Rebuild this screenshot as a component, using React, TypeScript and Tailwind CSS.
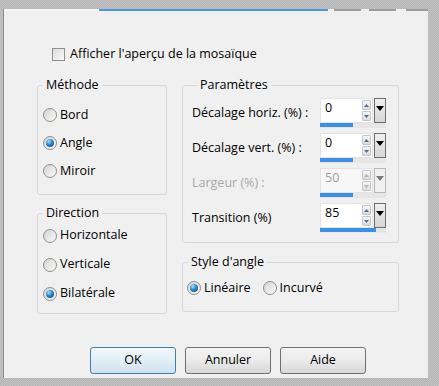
import React from "react";

function Radio({ checked }: { checked?: boolean }) {
  return (
    <span className="flex h-[14px] w-[14px] shrink-0 items-center justify-center rounded-full border border-[#8e8f8f] bg-linear-to-br from-[#d4d4d4] to-[#fbfbfb]">
      {checked && (
        <span className="h-[8px] w-[8px] rounded-full bg-[radial-gradient(circle_at_35%_30%,#a6e0ff_0%,#2a87c9_45%,#0b3f70_100%)]" />
      )}
    </span>
  );
}

function RadioRow({ label, checked, h }: { label: string; checked?: boolean; h: string }) {
  return (
    <div className={`flex items-center gap-[3px] pl-[5px] ${h}`}>
      <Radio checked={checked} />
      <span>{label}</span>
    </div>
  );
}

function Arrow({ up, disabled }: { up?: boolean; disabled?: boolean }) {
  return (
    <span className="flex h-[10px] w-[9px] items-center justify-center rounded-[1px] border border-[#c2c7cc] bg-linear-to-b from-[#f7f7f7] to-[#dcdcdc]">
      <svg width="5" height="3" viewBox="0 0 5 3">
        <path d={up ? "M0 3 L2.5 0 L5 3 Z" : "M0 0 L2.5 3 L5 0 Z"} fill={disabled ? "#b5b5b5" : "#4f6f95"} />
      </svg>
    </span>
  );
}

function SpinField({ value, pct, disabled }: { value: string; pct: number; disabled?: boolean }) {
  return (
    <div className="flex w-[66px] flex-col">
      <div className="flex h-[25px]">
        <div className={`flex flex-1 border border-[#e3e3e3] ${disabled ? "bg-[#f7f7f7] text-[#9d9d9d]" : "bg-white text-black"}`}>
          <span className="pl-[4px] pt-[1px] leading-[16px]">{value}</span>
          <div className="ml-auto flex flex-col gap-[1px] pr-[1px] pt-[1px]">
            <Arrow up disabled={disabled} />
            <Arrow disabled={disabled} />
          </div>
        </div>
        <div className={`ml-[1px] flex w-[12px] items-start justify-center border pt-[7px] ${disabled ? "border-[#b9b9b9] bg-[#f0f0f0]" : "border-[#6f6f6f] bg-linear-to-b from-[#f0f0f0] to-[#d6d6d6]"}`}>
          <svg width="8" height="5" viewBox="0 0 8 5">
            <path d="M0 0 L4 5 L8 0 Z" fill={disabled ? "#7a7a7a" : "#000"} />
          </svg>
        </div>
      </div>
      <div className="h-[5px] bg-[#e6e6e6]">
        <div className="h-[4px] bg-[#3d8fdf]" style={{ width: `${pct}%` }} />
      </div>
    </div>
  );
}

function ParamRow({ label, value, pct, disabled }: { label: string; value: string; pct: number; disabled?: boolean }) {
  return (
    <div className="flex h-[35px] items-start">
      <span className={`flex h-[30px] w-[128px] items-center ${disabled ? "text-[#a9a9a9]" : ""}`}>{label}</span>
      <SpinField value={value} pct={pct} disabled={disabled} />
    </div>
  );
}

function Group({ title, className, children }: { title: string; className: string; children: React.ReactNode }) {
  return (
    <fieldset className={`rounded-[3px] border border-[#d5d9dc] ${className}`}>
      <legend className="ml-[5px] px-[3px] leading-[16px]">{title}</legend>
      {children}
    </fieldset>
  );
}

function Button({ label, primary }: { label: string; primary?: boolean }) {
  return (
    <button
      className={`h-[27px] w-[86px] rounded-[3px] border ${
        primary
          ? "border-[#3c7fb1] bg-linear-to-b from-[#f2f8fc] via-[#e2eef6] to-[#cfe2ee]"
          : "border-[#707070] bg-linear-to-b from-[#f4f4f4] via-[#ebebeb] to-[#d8d8d8]"
      }`}
    >
      {label}
    </button>
  );
}

export default function App() {
  return (
    <div className="h-[386px] w-[439px] bg-[repeating-conic-gradient(#b6b6b6_0_25%,#c3c3c3_0_50%)] bg-[length:2px_2px] pl-[3px] pt-[9px] font-['Open_Sans',sans-serif] text-[12.5px] text-black">
      <div className="flex h-[369px] w-[425px] flex-col border-l border-[#8c8c8c] bg-[#f0f0f0]">
        <div className="flex h-[2px]">
          <div className="w-[95px] bg-[#f7f7f7]" />
          <div className="w-[229px] bg-[#4a97d8]" />
          <div className="w-[6px]" />
          <div className="w-[27px] bg-[#9c9c9c]" />
          <div className="w-[8px]" />
          <div className="w-[27px] bg-[#9c9c9c]" />
          <div className="w-[10px]" />
          <div className="w-[22px] bg-[#9c9c9c]" />
        </div>

        <div className="mt-[35px] flex h-[17px] items-center gap-[5px] pl-[48px]">
          <span className="h-[13px] w-[13px] border border-[#8e8f8f] bg-linear-to-br from-[#dcdcdc] to-[#fafafa]" />
          <span>Afficher l'aperçu de la mosaïque</span>
        </div>

        <div className="mt-[14px] flex gap-[15px] pl-[33px]">
          <div className="flex w-[130px] flex-col">
            <Group title="Méthode" className="pb-[9px] pt-[8px]">
              <RadioRow label="Bord" h="h-[28px]" />
              <RadioRow label="Angle" checked h="h-[28px]" />
              <RadioRow label="Miroir" h="h-[28px]" />
            </Group>
            <Group title="Direction" className="mt-[10px] pb-[5px]">
              <RadioRow label="Horizontale" h="h-[29px]" />
              <RadioRow label="Verticale" h="h-[29px]" />
              <RadioRow label="Bilatérale" checked h="h-[29px]" />
            </Group>
          </div>

          <div className="flex w-[217px] flex-col">
            <Group title="Paramètres" className="pb-[4px] pl-[9px] pt-[5px]">
              <ParamRow label="Décalage horiz. (%) :" value="0" pct={50} />
              <ParamRow label="Décalage vert. (%) :" value="0" pct={50} />
              <ParamRow label="Largeur (%) :" value="50" pct={50} disabled />
              <ParamRow label="Transition (%)" value="85" pct={85} />
            </Group>
            <Group title="Style d'angle" className="mt-[11px] pb-[13px] pt-[8px]">
              <div className="flex h-[20px] items-center pl-[4px]">
                <div className="flex items-center gap-[3px]">
                  <Radio checked />
                  <span>Linéaire</span>
                </div>
                <div className="ml-[12px] flex items-center gap-[3px]">
                  <Radio />
                  <span>Incurvé</span>
                </div>
              </div>
            </Group>
          </div>
        </div>

        <div className="mt-[33px] flex gap-[9px] pl-[86px]">
          <Button label="OK" primary />
          <Button label="Annuler" />
          <Button label="Aide" />
        </div>
      </div>
    </div>
  );
}
